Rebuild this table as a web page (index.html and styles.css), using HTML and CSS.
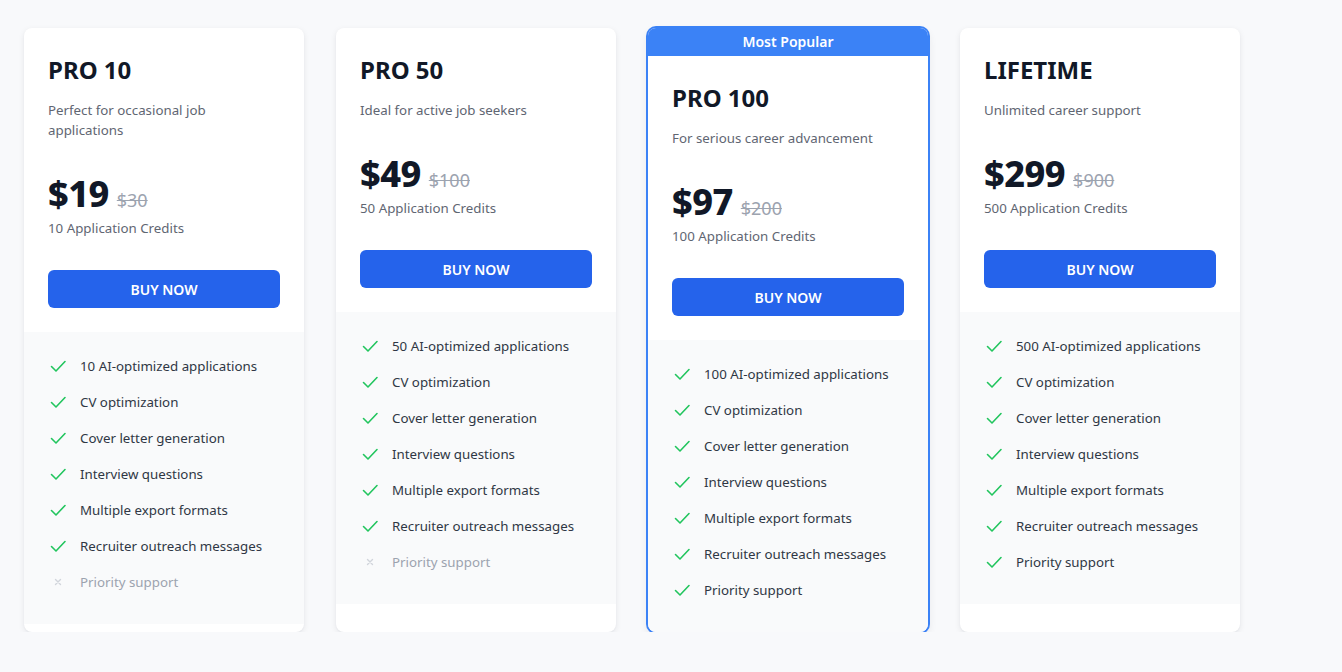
FILE: index.html
```html
<!DOCTYPE html>
<html lang="en">
<head>
<meta charset="utf-8">
<title>Pricing</title>
<link rel="stylesheet" href="styles.css">
</head>
<body>
<main class="plans">
  <section class="card">
    <div class="head">
      <h2 class="title">PRO 10</h2>
      <p class="desc">Perfect for occasional job applications</p>
      <div class="price"><span class="amount">$19</span><span class="old">$30</span></div>
      <p class="credits">10 Application Credits</p>
      <button class="buy">BUY NOW</button>
    </div>
    <ul class="features">
      <li><svg class="ico ok" viewBox="0 0 20 20"><path d="M3.5 10.5l4.5 4.5 9-9.5"/></svg>10 AI-optimized applications</li>
      <li><svg class="ico ok" viewBox="0 0 20 20"><path d="M3.5 10.5l4.5 4.5 9-9.5"/></svg>CV optimization</li>
      <li><svg class="ico ok" viewBox="0 0 20 20"><path d="M3.5 10.5l4.5 4.5 9-9.5"/></svg>Cover letter generation</li>
      <li><svg class="ico ok" viewBox="0 0 20 20"><path d="M3.5 10.5l4.5 4.5 9-9.5"/></svg>Interview questions</li>
      <li><svg class="ico ok" viewBox="0 0 20 20"><path d="M3.5 10.5l4.5 4.5 9-9.5"/></svg>Multiple export formats</li>
      <li><svg class="ico ok" viewBox="0 0 20 20"><path d="M3.5 10.5l4.5 4.5 9-9.5"/></svg>Recruiter outreach messages</li>
      <li class="off"><svg class="ico no" viewBox="0 0 20 20"><path d="M7.5 7.5l5 5M12.5 7.5l-5 5"/></svg>Priority support</li>
    </ul>
  </section>

  <section class="card">
    <div class="head">
      <h2 class="title">PRO 50</h2>
      <p class="desc">Ideal for active job seekers</p>
      <div class="price"><span class="amount">$49</span><span class="old">$100</span></div>
      <p class="credits">50 Application Credits</p>
      <button class="buy">BUY NOW</button>
    </div>
    <ul class="features">
      <li><svg class="ico ok" viewBox="0 0 20 20"><path d="M3.5 10.5l4.5 4.5 9-9.5"/></svg>50 AI-optimized applications</li>
      <li><svg class="ico ok" viewBox="0 0 20 20"><path d="M3.5 10.5l4.5 4.5 9-9.5"/></svg>CV optimization</li>
      <li><svg class="ico ok" viewBox="0 0 20 20"><path d="M3.5 10.5l4.5 4.5 9-9.5"/></svg>Cover letter generation</li>
      <li><svg class="ico ok" viewBox="0 0 20 20"><path d="M3.5 10.5l4.5 4.5 9-9.5"/></svg>Interview questions</li>
      <li><svg class="ico ok" viewBox="0 0 20 20"><path d="M3.5 10.5l4.5 4.5 9-9.5"/></svg>Multiple export formats</li>
      <li><svg class="ico ok" viewBox="0 0 20 20"><path d="M3.5 10.5l4.5 4.5 9-9.5"/></svg>Recruiter outreach messages</li>
      <li class="off"><svg class="ico no" viewBox="0 0 20 20"><path d="M7.5 7.5l5 5M12.5 7.5l-5 5"/></svg>Priority support</li>
    </ul>
  </section>

  <section class="card popular">
    <div class="badge">Most Popular</div>
    <div class="head">
      <h2 class="title">PRO 100</h2>
      <p class="desc">For serious career advancement</p>
      <div class="price"><span class="amount">$97</span><span class="old">$200</span></div>
      <p class="credits">100 Application Credits</p>
      <button class="buy">BUY NOW</button>
    </div>
    <ul class="features">
      <li><svg class="ico ok" viewBox="0 0 20 20"><path d="M3.5 10.5l4.5 4.5 9-9.5"/></svg>100 AI-optimized applications</li>
      <li><svg class="ico ok" viewBox="0 0 20 20"><path d="M3.5 10.5l4.5 4.5 9-9.5"/></svg>CV optimization</li>
      <li><svg class="ico ok" viewBox="0 0 20 20"><path d="M3.5 10.5l4.5 4.5 9-9.5"/></svg>Cover letter generation</li>
      <li><svg class="ico ok" viewBox="0 0 20 20"><path d="M3.5 10.5l4.5 4.5 9-9.5"/></svg>Interview questions</li>
      <li><svg class="ico ok" viewBox="0 0 20 20"><path d="M3.5 10.5l4.5 4.5 9-9.5"/></svg>Multiple export formats</li>
      <li><svg class="ico ok" viewBox="0 0 20 20"><path d="M3.5 10.5l4.5 4.5 9-9.5"/></svg>Recruiter outreach messages</li>
      <li><svg class="ico ok" viewBox="0 0 20 20"><path d="M3.5 10.5l4.5 4.5 9-9.5"/></svg>Priority support</li>
    </ul>
  </section>

  <section class="card">
    <div class="head">
      <h2 class="title">LIFETIME</h2>
      <p class="desc">Unlimited career support</p>
      <div class="price"><span class="amount">$299</span><span class="old">$900</span></div>
      <p class="credits">500 Application Credits</p>
      <button class="buy">BUY NOW</button>
    </div>
    <ul class="features">
      <li><svg class="ico ok" viewBox="0 0 20 20"><path d="M3.5 10.5l4.5 4.5 9-9.5"/></svg>500 AI-optimized applications</li>
      <li><svg class="ico ok" viewBox="0 0 20 20"><path d="M3.5 10.5l4.5 4.5 9-9.5"/></svg>CV optimization</li>
      <li><svg class="ico ok" viewBox="0 0 20 20"><path d="M3.5 10.5l4.5 4.5 9-9.5"/></svg>Cover letter generation</li>
      <li><svg class="ico ok" viewBox="0 0 20 20"><path d="M3.5 10.5l4.5 4.5 9-9.5"/></svg>Interview questions</li>
      <li><svg class="ico ok" viewBox="0 0 20 20"><path d="M3.5 10.5l4.5 4.5 9-9.5"/></svg>Multiple export formats</li>
      <li><svg class="ico ok" viewBox="0 0 20 20"><path d="M3.5 10.5l4.5 4.5 9-9.5"/></svg>Recruiter outreach messages</li>
      <li><svg class="ico ok" viewBox="0 0 20 20"><path d="M3.5 10.5l4.5 4.5 9-9.5"/></svg>Priority support</li>
    </ul>
  </section>
</main>
</body>
</html>
```

FILE: styles.css
```css
* { box-sizing: border-box; }
html, body { margin: 0; padding: 0; }
body {
  background: #f8f9fb;
  font-family: "Noto Sans", "Open Sans", "DejaVu Sans", sans-serif;
  color: #111827;
}
.plans {
  display: grid;
  grid-template-columns: repeat(4, 280px);
  column-gap: 32px;
  padding: 28px 24px 0;
  align-items: stretch;
}
.card {
  background: #ffffff;
  border-radius: 8px;
  box-shadow: 0 2px 6px rgba(15, 23, 42, 0.08), 0 1px 2px rgba(15, 23, 42, 0.04);
  overflow: hidden;
  display: flex;
  flex-direction: column;
}
.popular {
  box-shadow: 0 0 0 2px #3b82f6, 0 4px 10px rgba(15, 23, 42, 0.10);
}
.badge {
  height: 28px;
  background: #3b82f6;
  color: #ffffff;
  font-size: 14px;
  font-weight: 600;
  line-height: 28px;
  text-align: center;
}
.head {
  padding: 24px;
}
.title {
  margin: 2px 0 0;
  font-size: 24px;
  line-height: 32px;
  font-weight: 700;
  color: #111827;
}
.desc {
  margin: 14px 0 0;
  font-size: 13.3px;
  line-height: 20px;
  color: #5f6672;
}
.price {
  margin-top: 34px;
  display: flex;
  align-items: baseline;
  height: 40px;
}
.amount {
  font-size: 36px;
  line-height: 40px;
  font-weight: 800;
  color: #111827;
  letter-spacing: -0.5px;
}
.old {
  margin-left: 8px;
  font-size: 18px;
  color: #9ca3af;
  text-decoration: line-through;
}
.credits {
  margin: 4px 0 0;
  font-size: 13.3px;
  line-height: 20px;
  color: #5f6672;
}
.buy {
  display: block;
  width: 100%;
  height: 38px;
  margin-top: 32px;
  border: 0;
  border-radius: 6px;
  background: #2563eb;
  color: #ffffff;
  font-family: inherit;
  font-size: 14px;
  font-weight: 600;
}
.features {
  list-style: none;
  margin: 0;
  padding: 24px 24px 32px;
  background: #f9fafb;
  display: flex;
  flex-direction: column;
  gap: 16px;
}
.features li {
  display: flex;
  align-items: center;
  gap: 12px;
  font-size: 13.3px;
  line-height: 20px;
  color: #2f3744;
}
.features li.off { color: #9ca3af; }
.ico {
  width: 20px;
  height: 20px;
  flex: none;
  fill: none;
  stroke-linecap: round;
  stroke-linejoin: round;
}
.ok { stroke: #22c55e; stroke-width: 1.6; }
.no { stroke: #d1d5db; stroke-width: 1.4; }
```
